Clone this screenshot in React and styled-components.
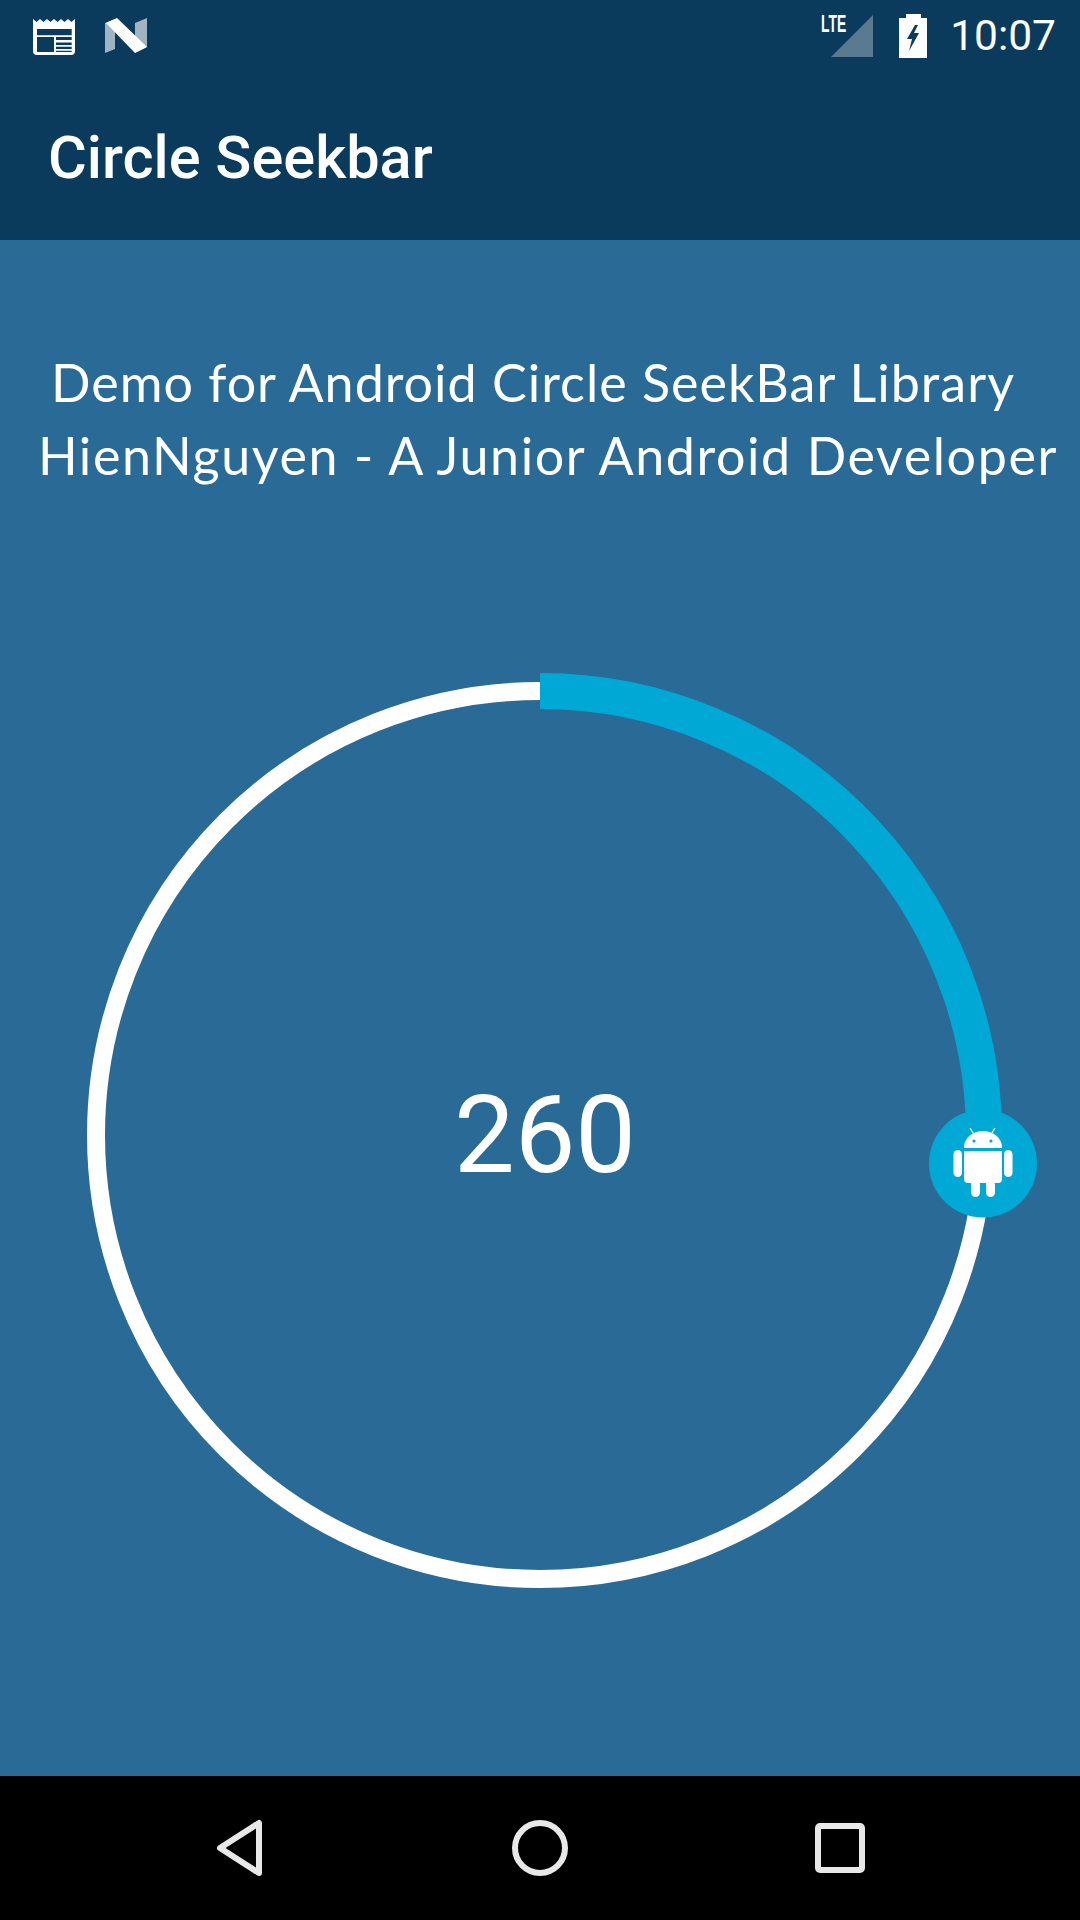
import React from "react";
import styled, { createGlobalStyle } from "styled-components";

const Global = createGlobalStyle`
  html, body { margin: 0; padding: 0; background: #000; }
  #root { width: 1080px; height: 1920px; overflow: hidden; }
`;

const Page = styled.div`
  width: 1080px;
  height: 1920px;
  display: flex;
  flex-direction: column;
  background: #296b96;
  font-family: Roboto, "Liberation Sans", sans-serif;
  color: #fff;
`;

const StatusBar = styled.div`
  height: 72px;
  flex: none;
  background: #0a3a5c;
  display: flex;
  align-items: center;
  padding: 0 24px 0 33px;
`;

const StatusLeft = styled.div`
  display: flex;
  align-items: center;
  gap: 30px;
  flex: 1;
`;

const StatusRight = styled.div`
  display: flex;
  align-items: center;
`;

const Signal = styled.div`
  position: relative;
  width: 53px;
  height: 72px;
  margin-right: 25px;
  display: flex;
  align-items: center;
  justify-content: flex-end;
`;

const Lte = styled.span`
  position: absolute;
  left: 0;
  top: 13px;
  font-family: "Liberation Sans", sans-serif;
  font-size: 24px;
  line-height: 22px;
  font-weight: 700;
  transform: scaleX(0.58);
  transform-origin: left center;
`;

const Clock = styled.span`
  font-size: 42.5px;
  line-height: 72px;
  margin-left: 23px;
`;

const Toolbar = styled.header`
  height: 168px;
  flex: none;
  background: #0a3a5c;
  display: flex;
  align-items: center;
  padding: 4px 0 0 48px;
  box-sizing: border-box;
  font-size: 59.5px;
  font-weight: 500;
`;

const Content = styled.main`
  flex: 1;
  display: flex;
  flex-direction: column;
  align-items: center;
  min-height: 0;
`;

const Intro = styled.div`
  padding-top: 106px;
  height: 395px;
  box-sizing: border-box;
  font-family: Lato, sans-serif;
  font-weight: 400;
  font-size: 52px;
  line-height: 73px;
  white-space: nowrap;
  display: flex;
  flex-direction: column;
  align-items: center;
`;

const Line = styled.div`
  letter-spacing: ${(p) => p.$spacing}px;
  transform: translateX(${(p) => p.$shift}px);
`;

const Seek = styled.div`
  position: relative;
  width: 1000px;
  height: 1000px;
  flex: none;
`;

const Dial = styled.svg`
  display: block;
`;

const Value = styled.div`
  position: absolute;
  left: 10px;
  right: 0;
  top: 0;
  bottom: 0;
  display: flex;
  align-items: center;
  justify-content: center;
  font-size: 108px;
`;

const NavBar = styled.nav`
  height: 144px;
  flex: none;
  background: #000;
  display: flex;
  align-items: center;
  justify-content: center;
`;

const NavSlot = styled.div`
  width: 300px;
  display: flex;
  justify-content: center;
`;

const CalendarIcon = () => (
  <svg width="42" height="37" viewBox="0 0 42 37">
    <path fill="#fff" fillRule="evenodd" d="M0 1 L3.5 4 L7 1 L10.5 4 L14 1 L17.5 4 L21 1 L24.5 4 L28 1 L31.5 4 L35 1 L38.5 4 L42 1 V33 Q42 37 38 37 H4 Q0 37 0 33 Z M4 11 V17.3 H38.7 V11 Z M4 19 V34 H21 V19 Z M23 19 V22 H38.7 V19 Z M23 24.5 V27 H38.7 V24.5 Z M23 28.8 V31 H38.7 V28.8 Z M23 32.7 V34 H38.7 V32.7 Z" />
  </svg>
);

const NLogo = () => (
  <svg width="42" height="36" viewBox="0 0 42 36">
    <path fill="#fff" fillOpacity="0.62" d="M0 5 L10 1 V31 L0 35 Z" />
    <path fill="#fff" fillOpacity="0.62" d="M30 5 L42 0 V29 L30 35 Z" />
    <path fill="#fff" d="M1 5 L12 0 L42 29 L30 35 Z" />
  </svg>
);

const SignalIcon = () => (
  <svg width="43" height="43" viewBox="0 0 43 43">
    <path fill="#fff" fillOpacity="0.33" d="M0 42 L42 0 V42 Z" />
  </svg>
);

const BatteryIcon = () => (
  <svg width="28" height="44" viewBox="0 0 28 44">
    <path fill="#fff" fillRule="evenodd" d="M7 0 H22 V4 H28 V44 H0 V4 H7 Z M16 11 L8 25 H13 L10 37 L20 19 H15 L19 11 Z" />
  </svg>
);

const AndroidGlyph = () => (
  <g fill="#fff">
    <path d="M424 -2 h38 v-1 a19 16 0 0 0 -38 0 z" />
    <path d="M424 1 h38 v28 a4 4 0 0 1 -4 4 h-30 a4 4 0 0 1 -4 -4 z" />
    <rect x="431" y="30" width="9" height="17" rx="4.5" />
    <rect x="446" y="30" width="9" height="17" rx="4.5" />
    <rect x="413.5" y="0" width="8.5" height="27" rx="4.25" />
    <rect x="464" y="0" width="8.5" height="27" rx="4.25" />
    <path d="M430 -22 L435 -14 M455 -22 L450 -14" stroke="#fff" strokeWidth="1.2" />
    <circle cx="434" cy="-9" r="1.6" fill="#00a8d6" />
    <circle cx="451" cy="-9" r="1.6" fill="#00a8d6" />
  </g>
);

const DialArt = () => (
  <Dial width="1000" height="1000" viewBox="0 0 1000 1000">
    <g transform="translate(500 500)">
      <circle r="444" fill="none" stroke="#fff" strokeWidth="18" />
      <path d="M0 -444 A444 444 0 0 1 443 28.5" fill="none" stroke="#00a8d6" strokeWidth="36" />
      <circle cx="443" cy="28.5" r="54" fill="#00a8d6" />
      <g transform="translate(0 15)">
        <AndroidGlyph />
      </g>
    </g>
  </Dial>
);

export default function App() {
  return (
    <Page>
      <Global />
      <StatusBar>
        <StatusLeft>
          <CalendarIcon />
          <NLogo />
        </StatusLeft>
        <StatusRight>
          <Signal>
            <Lte>LTE</Lte>
            <SignalIcon />
          </Signal>
          <BatteryIcon />
          <Clock>10:07</Clock>
        </StatusRight>
      </StatusBar>
      <Toolbar>Circle Seekbar</Toolbar>
      <Content>
        <Intro>
          <Line $spacing={1} $shift={-7}>Demo for Android Circle SeekBar Library</Line>
          <Line $spacing={1.6} $shift={8}>HienNguyen - A Junior Android Developer</Line>
        </Intro>
        <Seek>
          <DialArt />
          <Value>260</Value>
        </Seek>
      </Content>
      <NavBar>
        <NavSlot>
          <svg width="50" height="60" viewBox="0 0 50 60">
            <path d="M44 5 V55 L5 30 Z" fill="none" stroke="#e8e8e8" strokeWidth="6" strokeLinejoin="round" />
          </svg>
        </NavSlot>
        <NavSlot>
          <svg width="56" height="56" viewBox="0 0 56 56">
            <circle cx="28" cy="28" r="25" fill="none" stroke="#e8e8e8" strokeWidth="6" />
          </svg>
        </NavSlot>
        <NavSlot>
          <svg width="50" height="50" viewBox="0 0 50 50">
            <rect x="3" y="3" width="44" height="44" rx="2" fill="none" stroke="#e8e8e8" strokeWidth="6" />
          </svg>
        </NavSlot>
      </NavBar>
    </Page>
  );
}
